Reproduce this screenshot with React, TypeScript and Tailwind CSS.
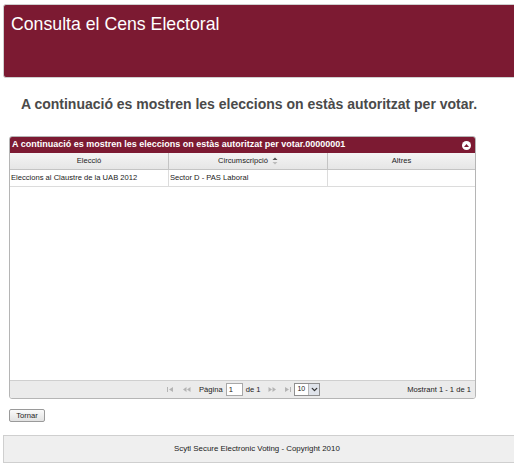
import { ChevronDown } from "lucide-react";

function SortIcon() {
  return (
    <svg width="6" height="8" viewBox="0 0 6 8" className="ml-[4px] inline-block">
      <path d="M3 0.5 L5.5 3 L0.5 3 Z" fill="#555" />
      <path d="M3 7.5 L5.5 5 L0.5 5 Z" fill="#bbb" />
    </svg>
  );
}

function PagerIcon({ kind }: { kind: "first" | "prev" | "next" | "last" }) {
  const paths: Record<string, string> = {
    first: "M1 1 H2 V6 H1 Z M7 1 L3 3.5 L7 6 Z",
    prev: "M4.5 1 L1 3.5 L4.5 6 Z M8.5 1 L5 3.5 L8.5 6 Z",
    next: "M1.5 1 L5 3.5 L1.5 6 Z M5.5 1 L9 3.5 L5.5 6 Z",
    last: "M2 1 L6 3.5 L2 6 Z M7 1 H8 V6 H7 Z",
  };
  return (
    <svg width="10" height="7" viewBox="0 0 10 7">
      <path d={paths[kind]} fill="#b4b4b4" />
    </svg>
  );
}

export default function App() {
  return (
    <div className="h-[465px] w-[514px] overflow-hidden bg-white font-['Liberation_Sans',Arial,sans-serif]">
      <div className="ml-[3px] mt-[4px] h-[74px] w-[530px] rounded-[3px] border border-[#cfcfcf] bg-[#7c1a32] px-[7px] pt-[9px] text-[17.7px] leading-[20px] text-white">
        Consulta el Cens Electoral
      </div>

      <h1 className="mt-[18px] pr-[16px] text-center text-[14px] font-bold leading-[17px] text-[#4a4a4a]">
        A continuació es mostren les eleccions on estàs autoritzat per votar.
      </h1>

      <div className="ml-[9px] mt-[23px] flex h-[263px] w-[467px] flex-col rounded-[3px] border border-[#b5b5b5] text-[7.6px] text-[#222]">
        <div className="flex h-[16px] items-center justify-between rounded-t-[2px] bg-[#7c1a32] pl-[2px] pr-[4px] text-[9px] font-bold text-white">
          <span>A continuació es mostren les eleccions on estàs autoritzat per votar.00000001</span>
          <span className="flex h-[9px] w-[9px] items-center justify-center rounded-full bg-white">
            <svg width="5" height="3" viewBox="0 0 5 3">
              <path d="M2.5 0 L5 3 L0 3 Z" fill="#7c1a32" />
            </svg>
          </span>
        </div>

        <div className="grid h-[17px] grid-cols-[159px_159px_1fr] border-b border-[#c4c4c4] bg-gradient-to-b from-[#f4f4f4] to-[#e6e6e6]">
          <div className="flex items-center justify-center border-r border-[#c4c4c4]">Elecció</div>
          <div className="flex items-center justify-center border-r border-[#c4c4c4]">
            Circumscripció
            <SortIcon />
          </div>
          <div className="flex items-center justify-center">Altres</div>
        </div>

        <div className="grid h-[17px] grid-cols-[159px_159px_1fr] border-b border-[#dcdcdc]">
          <div className="flex items-center border-r border-[#dcdcdc] pl-[1px]">Eleccions al Claustre de la UAB 2012</div>
          <div className="flex items-center border-r border-[#dcdcdc] pl-[1px]">Sector D - PAS Laboral</div>
          <div />
        </div>

        <div className="flex-1" />

        <div className="relative flex h-[18px] items-center rounded-b-[2px] border-t border-[#cfcfcf] bg-[#ebebeb]">
          <div className="absolute left-[156px] flex items-center">
            <PagerIcon kind="first" />
            <span className="ml-[6px]">
              <PagerIcon kind="prev" />
            </span>
            <span className="ml-[7px]">Pàgina</span>
            <span className="ml-[3px] flex h-[13px] w-[17px] items-center border border-[#a8a8a8] bg-white pl-[2px]">1</span>
            <span className="ml-[3px]">de 1</span>
            <span className="ml-[7px]">
              <PagerIcon kind="next" />
            </span>
            <span className="ml-[6px]">
              <PagerIcon kind="last" />
            </span>
            <span className="ml-[1px] flex h-[13px] w-[26px] items-center border border-[#8f8f8f] bg-white pl-[2px] text-[7px]">
              <span className="flex-1">10</span>
              <span className="flex h-[11px] w-[11px] items-center justify-center border-l border-[#b8b8b8] bg-[#dfe3ea]">
                <ChevronDown size={9} strokeWidth={3.5} color="#333" />
              </span>
            </span>
          </div>
          <span className="ml-auto pr-[4px]">Mostrant 1 - 1 de 1</span>
        </div>
      </div>

      <button className="ml-[9px] mt-[10px] flex h-[13px] w-[36px] items-center justify-center rounded-[2px] border border-[#9a9a9a] bg-gradient-to-b from-[#fafafa] to-[#e2e2e2] text-[7.6px] leading-none text-[#222]">
        Tornar
      </button>

      <div className="ml-[3px] mt-[13px] flex h-[28px] w-[530px] items-center border border-[#cfcfcf] bg-[#efefef] pl-[170px] text-[7.9px] text-[#222]">
        Scytl Secure Electronic Voting - Copyright 2010
      </div>
    </div>
  );
}
